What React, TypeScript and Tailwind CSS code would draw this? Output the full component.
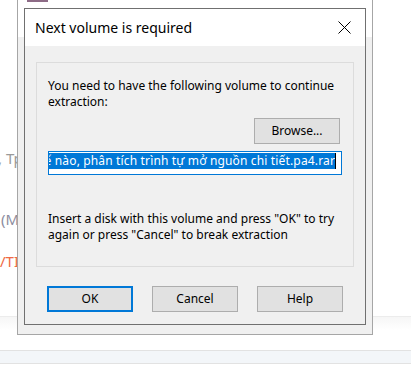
const ui = "font-['Segoe_UI','Noto_Sans',sans-serif]";

function WinButton({ label, primary }: { label: string; primary?: boolean }) {
    return (
        <div
            className={
                primary
                    ? 'w-[86px] h-[26px] flex items-center justify-center bg-[#e1e1e1] border-2 border-[#0078d7] text-[12px] text-black'
                    : 'w-[86px] h-[26px] flex items-center justify-center bg-[#e1e1e1] border border-[#adadad] text-[12px] text-black'
            }
        >
            {label}
        </div>
    );
}

function CloseIcon() {
    return (
        <svg width="13" height="13" viewBox="0 0 13 13" className="text-black">
            <path d="M0.5 0.5 L12.5 12.5 M12.5 0.5 L0.5 12.5" stroke="currentColor" strokeWidth="1" fill="none" />
        </svg>
    );
}

export default function App() {
    return (
        <div className={`relative w-[411px] h-[370px] overflow-hidden bg-white ${ui}`}>
            {/* page behind the windows */}
            <div className="flex flex-col h-full">
                <div className="h-[148px]" />
                <div className="h-[20px] text-[15px] leading-[20px] text-[#9a9a9a] whitespace-nowrap -ml-[2px]">, Tp</div>
                <div className="h-[41px]" />
                <div className="h-[20px] text-[15px] leading-[20px] text-[#8c8ca0] whitespace-nowrap pl-[1px]">(M</div>
                <div className="h-[22px]" />
                <div className="h-[20px] text-[15px] leading-[20px] text-[#ef6a45] whitespace-nowrap">/TI</div>
                <div className="h-[45px]" />
                <div className="h-[14px] border-t border-[#ececec] bg-gradient-to-b from-[#f6f6f6] to-white" />
                <div className="h-[20px]" />
                <div className="h-[14px] border-y border-[#e2e2e2] bg-[#f3f6f9]" />
                <div className="flex-1" />
            </div>

            {/* main window behind the dialog */}
            <div className="absolute left-[17px] top-[-20px] w-[356px] h-[355px] border border-[#a6a6a6] flex flex-col">
                <div className="h-[56px] bg-white relative">
                    <div className="absolute left-[9px] top-[19px] w-[21px] h-[2px] bg-[#8d6b86]" />
                </div>
                <div className="flex-1 bg-[#f0f0f0]" />
            </div>

            {/* dialog */}
            <div className="absolute left-[24px] top-[8px] w-[342px] h-[317px] border border-[#707070] flex flex-col bg-[#f0f0f0]">
                <div className="h-[37px] bg-white flex items-center justify-between pl-[10px] pr-[14px]">
                    <span className="text-[14px] text-black leading-none">Next volume is required</span>
                    <CloseIcon />
                </div>
                <div className="flex-1 flex flex-col px-[11px] pt-[16px]">
                    <div className="h-[205px] border border-[#dcdcdc] flex flex-col pl-[11px] pr-[11px] pt-[15px]">
                        <p className="text-[12px] leading-[16px] text-black whitespace-nowrap">
                            You need to have the following volume to continue
                            <br />
                            extraction:
                        </p>
                        <div className="flex justify-end mt-[8px] pr-[2px]">
                            <WinButton label="Browse..." />
                        </div>
                        <div className="mt-[7px] h-[24px] border border-[#0078d7] bg-white flex justify-end overflow-hidden pl-[2px] pr-[5px] pt-[1px]">
                            <div className="flex items-start h-[16px] shrink-0">
                                <span className="bg-[#0078d7] text-white text-[12px] leading-[16px] tracking-[0.15px] whitespace-nowrap">
                                    thế nào, phân tích trình tự mở nguồn chi tiết.pa4.rar
                                </span>
                                <span className="w-px h-[16px] bg-black" />
                            </div>
                        </div>
                        <p className="mt-[36px] text-[12px] leading-[16px] text-black whitespace-nowrap">
                            Insert a disk with this volume and press "OK" to try
                            <br />
                            again or press "Cancel" to break extraction
                        </p>
                    </div>
                    <div className="flex gap-[19px] mt-[19px] ml-[11px]">
                        <WinButton label="OK" primary />
                        <WinButton label="Cancel" />
                        <WinButton label="Help" />
                    </div>
                </div>
            </div>
        </div>
    );
}
